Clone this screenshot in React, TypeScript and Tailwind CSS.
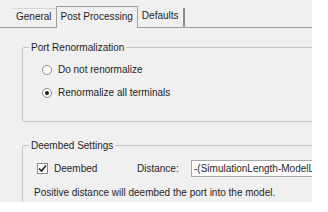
import { useState } from "react";

const font = { fontFamily: "Tahoma, 'Liberation Sans', Arial, sans-serif" };

function Tab({ label, active }: { label: string; active?: boolean }) {
  return (
    <div
      className={
        active
          ? "relative z-10 -mb-px h-[22px] px-[4px] pt-[2px] bg-[#f0f0f0] border border-b-0 border-[#a0a0a0]"
          : "h-[19px] px-[4px] bg-[#f0f0f0] border-t border-[#d8d8d8]"
      }
    >
      {label}
    </div>
  );
}

export default function App() {
  const [mode, setMode] = useState<"none" | "all">("all");
  const [deembed, setDeembed] = useState(true);

  return (
    <div className="w-[328px] h-[212px] bg-white text-[10px] text-[#1e1e1e]" style={font}>
      <div className="w-[312px] h-[202px] bg-[#f0f0f0] overflow-hidden flex flex-col">
        {/* Tabs */}
        <div className="h-[27px] shrink-0 flex items-end pl-[12px]">
          <Tab label="General" />
          <Tab label="Post Processing" active />
          <div className="h-[19px] px-[4px] border-r-2 border-[#8c8c8c]">Defaults</div>
        </div>

        <div className="flex-1 border-t border-[#a0a0a0] pl-[22px] pt-[12px]">
          {/* Port Renormalization */}
          <fieldset className="w-[320px] h-[82px] border border-[#c4c4c4] rounded-[2px]">
            <legend className="ml-[6px] px-[2px]">Port Renormalization</legend>
            <div className="mt-[7px] pl-[19px] flex flex-col gap-[8px]">
              <label className="flex items-center gap-[6px]" onClick={() => setMode("none")}>
                <span className="w-[10px] h-[10px] rounded-full border border-[#8a8a8a] bg-white flex items-center justify-center">
                  {mode === "none" && <span className="w-[4px] h-[4px] rounded-full bg-[#222]" />}
                </span>
                Do not renormalize
              </label>
              <label className="flex items-center gap-[6px]" onClick={() => setMode("all")}>
                <span className="w-[10px] h-[10px] rounded-full border border-[#8a8a8a] bg-white flex items-center justify-center">
                  {mode === "all" && <span className="w-[4px] h-[4px] rounded-full bg-[#222]" />}
                </span>
                Renormalize all terminals
              </label>
            </div>
          </fieldset>

          {/* Deembed Settings */}
          <fieldset className="mt-[16px] w-[320px] h-[80px] border border-[#c4c4c4] rounded-[2px]">
            <legend className="ml-[6px] px-[2px]">Deembed Settings</legend>
            <div className="mt-[7px] pl-[14px] flex items-center">
              <label className="flex items-center gap-[6px] w-[100px]" onClick={() => setDeembed(!deembed)}>
                <span className="w-[11px] h-[11px] border border-[#8a8a8a] bg-white flex items-center justify-center">
                  {deembed && (
                    <svg width="9" height="9" viewBox="0 0 9 9">
                      <path d="M1 4.5 L3.5 7 L8 1.5" fill="none" stroke="#222" strokeWidth="1.6" />
                    </svg>
                  )}
                </span>
                Deembed
              </label>
              <span className="w-[54px]">Distance:</span>
              <input
                className="w-[130px] h-[17px] border border-[#a8a8a8] bg-white px-[2px] text-[10px] outline-none"
                defaultValue="-(SimulationLength-ModelLength)"
                style={font}
              />
            </div>
            <div className="mt-[8px] pl-[11px]">Positive distance will deembed the port into the model.</div>
          </fieldset>
        </div>
      </div>
    </div>
  );
}
